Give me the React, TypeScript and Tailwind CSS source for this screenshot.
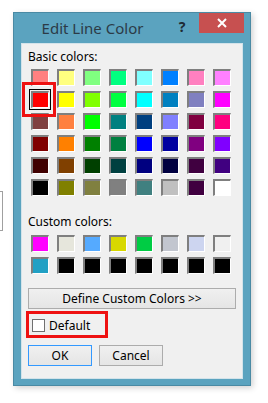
const basic = [
  '#ff8080', '#ffff80', '#80ff80', '#00ff80', '#80ffff', '#0080ff', '#ff80c0', '#ff80ff',
  '#ff0000', '#ffff00', '#80ff00', '#00ff40', '#00ffff', '#0080c0', '#8080c0', '#ff00ff',
  '#804040', '#ff8040', '#00ff00', '#008080', '#004080', '#8080ff', '#800040', '#ff0080',
  '#800000', '#ff8000', '#008000', '#008040', '#0000ff', '#0000a0', '#800080', '#8000ff',
  '#400000', '#804000', '#004000', '#004040', '#000080', '#000040', '#400040', '#400080',
  '#000000', '#808000', '#808040', '#808080', '#408080', '#c0c0c0', '#400040', '#ffffff',
];

const custom = [
  '#ff00ff', '#e6e6dc', '#55aaff', '#d8d800', '#00cc44', '#c2c6cf', '#cdd5f0', '#f0f0f0',
  '#21a0c4', '#000000', '#000000', '#000000', '#000000', '#000000', '#000000', '#000000',
];

function Swatch({ color, selected }: { color: string; selected?: boolean }) {
  return (
    <div
      className={`w-[18px] h-[17px] border-t-2 border-l-2 border-r border-b border-t-[#7f7f7f] border-l-[#7f7f7f] border-r-white border-b-white ${
        selected ? 'outline outline-1 outline-black outline-offset-[1px]' : ''
      }`}
      style={{ backgroundColor: color }}
    />
  );
}

function SwatchGrid({ colors, selectedIndex }: { colors: string[]; selectedIndex?: number }) {
  return (
    <div className="grid grid-cols-[repeat(8,18px)] gap-x-[8px] gap-y-[5px] ml-[3px]">
      {colors.map((c, i) => (
        <Swatch key={i} color={c} selected={i === selectedIndex} />
      ))}
    </div>
  );
}

export default function App() {
  return (
    <div
      className="w-[268px] h-[403px] bg-white relative overflow-hidden pt-[12px] pl-[13px]"
      style={{ fontFamily: "'Segoe UI', 'Noto Sans', sans-serif" }}
    >
      {/* Edge of a window behind the dialog */}
      <div className="absolute left-[-10px] top-[191px] w-[13px] h-[40px] border border-[#a0a0a0]" />

      {/* Dialog */}
      <div className="w-[238px] h-[374px] bg-[#5ba3bf] border border-[#4a8aa4] flex flex-col shadow-[2px_2px_6px_rgba(0,0,0,0.18)]">
        {/* Title bar */}
        <div className="h-[30px] flex items-start">
          <div className="flex-1 h-[30px] flex items-center justify-center pl-[2px] text-[15px] text-[#2c3b47]">
            Edit Line Color
          </div>
          <div className="w-[26px] h-[26px] flex items-center justify-center text-[14px] font-bold text-[#1e2a33] mr-[4px]">
            ?
          </div>
          <div className="w-[45px] h-[20px] bg-[#c75050] flex items-center justify-center mr-[6px]">
            <svg width="10" height="10" viewBox="0 0 10 10">
              <path d="M1 1L9 9M9 1L1 9" stroke="white" strokeWidth="2" />
            </svg>
          </div>
        </div>

        {/* Client area */}
        <div className="mx-[7px] h-[336px] bg-[#f0f0f0] border border-[#d3e3ea] px-[6px] flex flex-col text-[12px] leading-[16px] text-black">
          <div className="mt-[5px]">Basic colors:</div>
          <div className="mt-[4px]">
            <SwatchGrid colors={basic} selectedIndex={8} />
          </div>
          <div className="mt-[18px]">Custom colors:</div>
          <div className="mt-[5px]">
            <SwatchGrid colors={custom} />
          </div>
          <div className="mt-[14px] h-[21px] border border-[#acacac] bg-gradient-to-b from-[#f0f0f0] to-[#e5e5e5] flex items-center justify-center">
            Define Custom Colors &gt;&gt;
          </div>
          <div className="mt-[10px] h-[13px] flex items-center ml-[4px]">
            <div className="w-[13px] h-[13px] border border-[#707070] bg-white" />
            <span className="ml-[4px]">Default</span>
          </div>
          <div className="mt-[13px] flex gap-[7px]">
            <div className="w-[64px] h-[21px] border border-[#3399ff] bg-gradient-to-b from-[#f0f0f0] to-[#e5e5e5] flex items-center justify-center">
              OK
            </div>
            <div className="w-[64px] h-[21px] border border-[#acacac] bg-gradient-to-b from-[#f0f0f0] to-[#e5e5e5] flex items-center justify-center">
              Cancel
            </div>
          </div>
        </div>
      </div>

      {/* Red annotation boxes */}
      <div className="absolute left-[22px] top-[82px] w-[34px] h-[35px] border-[3px] border-[#ee1111]" />
      <div className="absolute left-[26px] top-[311px] w-[82px] h-[27px] border-[3px] border-[#ee1111]" />
    </div>
  );
}
